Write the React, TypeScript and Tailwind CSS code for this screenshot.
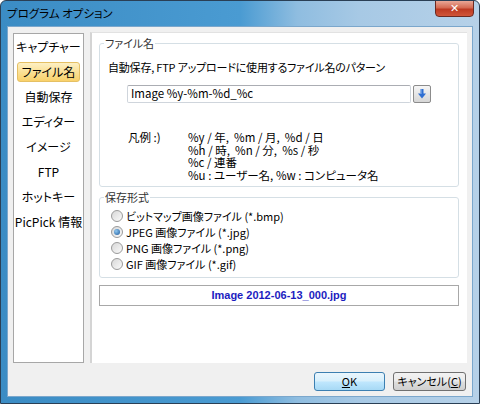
import React from 'react';

const navItems = ['キャプチャー', 'ファイル名', '自動保存', 'エディター', 'イメージ', 'FTP', 'ホットキー', 'PicPick 情報'];

const formats = [
  { label: 'ビットマップ画像ファイル (*.bmp)', checked: false },
  { label: 'JPEG 画像ファイル (*.jpg)', checked: true },
  { label: 'PNG 画像ファイル (*.png)', checked: false },
  { label: 'GIF 画像ファイル (*.gif)', checked: false },
];

const Radio = ({ checked }: { checked: boolean }) => (
  <span className="w-[12px] h-[12px] rounded-full border border-[#9a9a9a] bg-[linear-gradient(135deg,#d8d8d8,#fafafa)] flex items-center justify-center shrink-0">
    {checked && <span className="w-[6px] h-[6px] rounded-full bg-[radial-gradient(circle_at_35%_35%,#8fc7f0,#1d5a9c)]" />}
  </span>
);

export default function App() {
  return (
    <div className="w-[480px] h-[404px] flex flex-col rounded-t-[6px] border border-[#2a3f55] bg-[linear-gradient(90deg,#3b8cc4_0%,#4a9bd2_50%,#8fbde0_62%,#a7c9e5_75%,#b6d1e8_100%)] font-['Noto_Sans_CJK_JP',sans-serif] [font-feature-settings:'palt'] text-[12px] text-black overflow-hidden">
      {/* Title bar */}
      <div className="h-[25px] flex items-start justify-between pl-[6px] pr-[5px]">
        <span className="mt-[4px] text-[11.5px] leading-[16px] text-black">プログラム オプション</span>
        <button className="w-[39px] h-[17px] -mt-px rounded-b-[4px] border border-[#6b2a22] bg-[linear-gradient(180deg,#e9a796_0%,#d46a52_45%,#bd3a22_55%,#d0563a_100%)] flex items-center justify-center text-white text-[11px] font-bold font-['DejaVu_Sans',sans-serif] leading-none">
          ✕
        </button>
      </div>

      {/* Client area */}
      <div className="flex-1 mx-[6px] mb-[6px] bg-[#f0f0f0] border border-[#7ba7cc] flex flex-col">
        <div className="flex gap-[6px] pl-[5px] pr-[5px] pt-[5px] h-[336px]">
          {/* Nav */}
          <div className="w-[71px] h-[330px] mt-px bg-white border border-[#a7a7a7] pt-[3px] px-[3px] flex flex-col gap-[5px]">
            {navItems.map((item, i) => (
              <div
                key={item}
                className={
                  i === 1
                    ? 'h-[20px] flex items-center justify-center whitespace-nowrap rounded-[3px] border border-[#e5c064] bg-[linear-gradient(180deg,#fdf0c4_0%,#fbe29a_45%,#f9d16a_100%)] text-[12px] leading-none'
                    : 'h-[20px] flex items-center justify-center whitespace-nowrap text-[12px] leading-none'
                }
              >
                {item}
              </div>
            ))}
          </div>

          {/* Right panel */}
          <div className="flex-1 h-[331px] bg-white border-l-2 border-l-[#d4d4d4] border-t border-t-[#e2e2e2] pl-[7px] pr-[8px] pt-[3px] flex flex-col">
            <fieldset className="h-[151px] border border-[#d5dfe5] rounded-[3px] pl-[8px]">
              <legend className="-ml-[4px] px-px text-[11px] leading-[15px] text-[#333]">ファイル名</legend>
              <div className="mt-[8px] text-[11px] leading-[16px] tracking-[-0.2px]">自動保存, FTP アップロードに使用するファイル名のパターン</div>
              <div className="mt-[10px] pl-[19px] flex items-center gap-[2px]">
                <div className="w-[284px] h-[18px] border border-[#cfd5dc] border-t-[#abadb3] rounded-[2px] px-[3px] flex items-center text-[11.5px]">
                  Image %y-%m-%d_%c
                </div>
                <button className="w-[18px] h-[18px] rounded-[2px] border border-[#8c8c8c] bg-[linear-gradient(180deg,#f6f6f6,#d6d6d6)] flex items-center justify-center">
                  <svg width="8" height="10" viewBox="0 0 8 10">
                    <rect x="2.5" y="0" width="3" height="5" fill="#2f6fd2" />
                    <path d="M0 4.5 L8 4.5 L4 9.5 Z" fill="#2f6fd2" />
                    <rect x="2.5" y="0" width="1" height="5" fill="#8db8f0" />
                  </svg>
                </button>
              </div>
              <div className="mt-[28px] pl-[20px] flex text-[11.5px] leading-[12.5px]">
                <div className="w-[60px]">凡例 :)</div>
                <div className="flex flex-col">
                  <span>%y / 年,&nbsp; %m / 月,&nbsp; %d / 日</span>
                  <span>%h / 時,&nbsp; %n / 分,&nbsp; %s / 秒</span>
                  <span>%c / 連番</span>
                  <span>%u : ユーザー名, %w : コンピュータ名</span>
                </div>
              </div>
            </fieldset>

            <fieldset className="mt-[3px] h-[88px] border border-[#d5dfe5] rounded-[3px] pl-[11px] pt-[3px]">
              <legend className="-ml-[7px] px-px text-[11px] leading-[15px] text-[#333]">保存形式</legend>
              <div className="flex flex-col">
                {formats.map((f) => (
                  <label key={f.label} className="h-[16px] flex items-center gap-[3px] text-[11px]">
                    <Radio checked={f.checked} />
                    <span>{f.label}</span>
                  </label>
                ))}
              </div>
            </fieldset>

            <div className="mt-[7px] h-[21px] border border-[#a8a8a8] flex items-center justify-center text-[11px] font-bold text-[#1c1cbf] font-['Liberation_Sans',sans-serif]">
              Image 2012-06-13_000.jpg
            </div>
          </div>
        </div>

        {/* Buttons */}
        <div className="flex justify-end gap-[8px] pr-[6px] pt-[9px]">
          <button className="w-[71px] h-[19px] rounded-[3px] border border-[#3c7fb1] bg-[linear-gradient(180deg,#eaf6fd_0%,#d9f0fc_45%,#bee6fd_55%,#a7d9f5_100%)] text-[11px] leading-none">
            <span className="underline">O</span>K
          </button>
          <button className="w-[73px] h-[19px] rounded-[3px] border border-[#707070] bg-[linear-gradient(180deg,#f2f2f2_0%,#ebebeb_45%,#dddddd_55%,#cfcfcf_100%)] text-[11px] leading-none">
            キャンセル(<span className="underline">C</span>)
          </button>
        </div>
      </div>
    </div>
  );
}
